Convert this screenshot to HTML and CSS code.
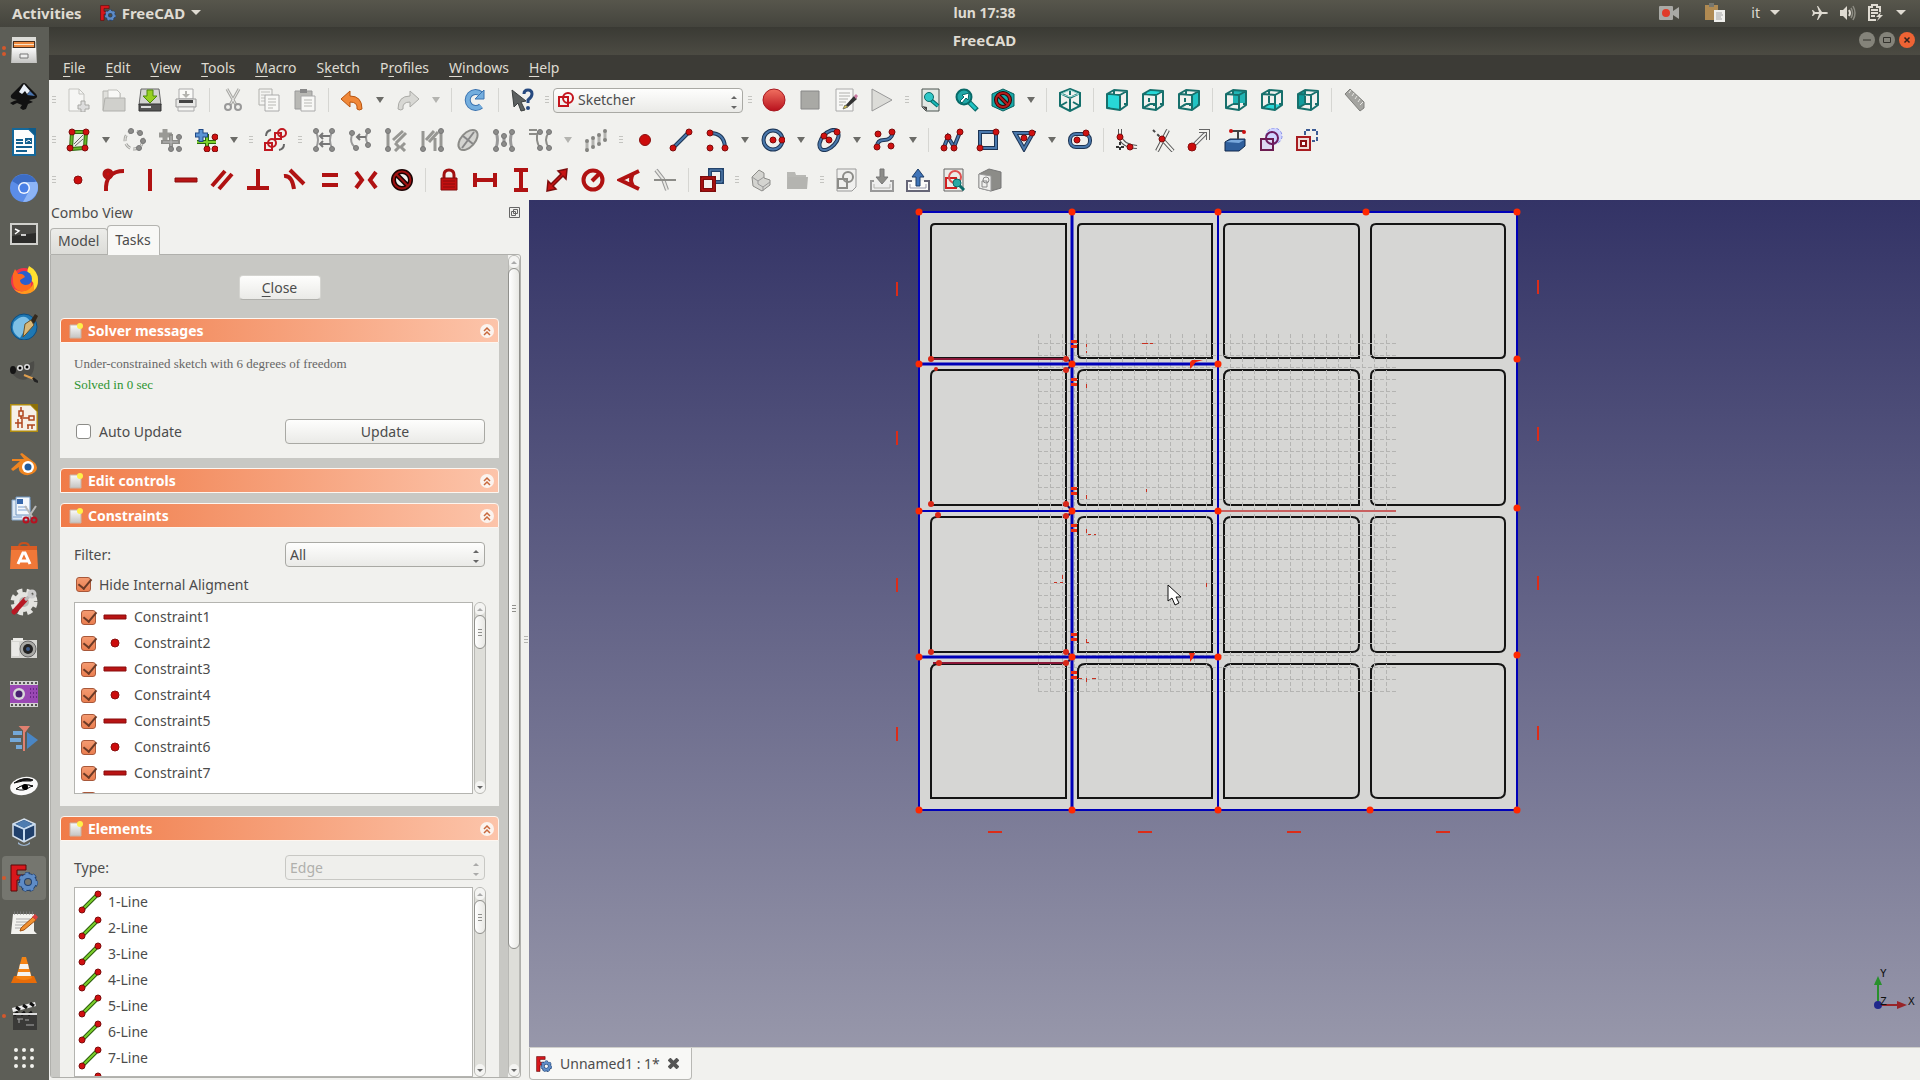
FILE: index.html
```html
<!DOCTYPE html>
<html lang="en">
<head>
    <meta charset="UTF-8">
    <meta name="viewport" content="width=device-width, initial-scale=1.0">
    <title>FreeCAD</title>
    <link rel="stylesheet" href="styles.css">
</head>
<body>

<!-- shared shapes -->
<svg class="defs" aria-hidden="true">
    <defs>
        <linearGradient id="steel" x1="0" y1="0" x2="0" y2="1"><stop offset="0" stop-color="#fafafa"/><stop offset="1" stop-color="#c4c4c2"/></linearGradient>
        <linearGradient id="ball" x1="0" y1="0" x2="0" y2="1"><stop offset="0" stop-color="#f07060"/><stop offset="1" stop-color="#b8101c"/></linearGradient>
        <circle id="n" r="3" fill="#d01010" stroke="#7d0c0c"/>
        <circle id="g" r="2.5" fill="#8c8c8a" stroke="#777"/>
        <symbol id="freecad" viewBox="0 0 28 28">
            <path d="M1 1h15v5H7v5h7v5H7v11H1z" fill="#d8171c" stroke="#5a0808"/>
            <circle cx="18" cy="18" r="6" fill="none" stroke="#1f3f6e" stroke-width="6"/>
            <circle cx="18" cy="18" r="8" fill="none" stroke="#1f3f6e" stroke-width="4" stroke-dasharray="4 3"/>
            <circle cx="18" cy="18" r="6" fill="none" stroke="#5f8cc6" stroke-width="4"/>
            <circle cx="18" cy="18" r="8" fill="none" stroke="#5f8cc6" stroke-width="3" stroke-dasharray="3 4"/>
        </symbol>
        <symbol id="page" viewBox="0 0 14 16">
            <path d="M1 2h11v13H1z" fill="url(#steel)" stroke="#c9b5a8"/>
            <circle cx="11" cy="3" r="3" fill="#fff04a"/>
        </symbol>
        <symbol id="fold" viewBox="0 0 14 14">
            <circle cx="7" cy="7" r="7" fill="#fbf3ee"/>
            <path d="M4 7l3-3 3 3M4 11l3-3 3 3" fill="none" stroke="#c8683c" stroke-width="1.5"/>
        </symbol>
        <symbol id="edge" viewBox="0 0 24 24">
            <path d="M5 19L19 5" stroke="#2d5c0c" stroke-width="4"/><path d="M5 19L19 5" stroke="#7cd02c" stroke-width="2"/>
            <use href="#n" x="4" y="20"/><use href="#n" x="20" y="4"/>
        </symbol>
        <symbol id="hbar" viewBox="0 0 24 24"><path d="M1 10h22v4H1z" fill="#b81414" stroke="#8a0c0c"/></symbol>
        <symbol id="dot" viewBox="0 0 24 24"><circle cx="12" cy="12" r="4" fill="#cc0c0c" stroke="#8a1010"/></symbol>
        <g id="cube" fill="none" stroke="#17706c" stroke-width="2" stroke-linejoin="round">
            <path d="M2 6l13 1v15L2 20zM2 6l7-4 13 1-7 4M22 3v14l-7 5M9 2v4M9 16l-7 4M9 16h6M19 16h3"/>
        </g>
    </defs>
</svg>

<header class="topbar">
    <button class="top-item">Activities</button>
    <button class="top-item app-menu"><svg width="16" height="16"><use href="#freecad"/></svg>FreeCAD<i class="caret"></i></button>
    <span class="clock">lun 17:38</span>
    <div class="tray">
        <svg width="20" height="16" viewBox="0 0 20 16"><path d="M1 1h12q1 0 1 1v4l6-4v12l-6-4v4q0 1-1 1H1q-1 0-1-1V2q0-1 1-1z" fill="#a9a9a5"/><circle cx="7" cy="8" r="4" fill="#e03a28"/></svg>
        <svg class="clip" width="20" height="20" viewBox="0 0 20 20"><path d="M0 2h13v15H0z" fill="#b08a52"/><path d="M4 0h5v4H4z" fill="#77776f"/><path d="M9 7h11v12H9z" fill="#efefec"/><path d="M11 10h6M11 12h7M11 14h5M11 16h6" stroke="#a5a5a5"/></svg>
        <span class="lang">it<i class="caret"></i></span>
        <svg class="plane" width="16" height="16" viewBox="0 0 16 16"><path d="M16 8q0-1-2-1h-4L6 1H5l2 6H3L1 5H0l1 3-1 3h1l2-2h4l-2 6h1l4-6h4q2 0 2-1z" fill="#dfdbd2"/></svg>
        <svg width="16" height="16" viewBox="0 0 16 16"><path d="M0 5h3l4-4v14l-4-4H0z" fill="#dfdbd2"/><path d="M9 5q2 3 0 6" stroke="#dfdbd2" stroke-width="2" fill="none"/><path d="M11 3q3 5 0 10M13 1q4 7 0 14" stroke="#8d8c83" fill="none" stroke-width="1.5"/></svg>
        <svg width="16" height="18" viewBox="0 0 16 18"><path d="M12 8V3H9V1H4v2H1v13h7" fill="none" stroke="#dfdbd2" stroke-width="2"/><path d="M3 6h7M3 9h7M3 12h4" stroke="#dfdbd2" stroke-width="2"/><path d="M13 8l-5 5h3l-2 4 6-6h-3z" fill="#dfdbd2"/></svg>
        <i class="caret"></i>
    </div>
</header>

<div class="desktop">
    <nav class="launcher">
        <button class="launch open two" aria-label="Files"><svg viewBox="0 0 28 28"><path d="M2 2h24l1 25H1z" fill="#bfbfbb"/><path d="M2 1h24v5H2z" fill="#dcdcd8"/><path d="M3 5h22v7H3z" fill="#4a3020"/><path d="M4 6h20v5H4z" fill="#ee8a40"/><path d="M4 8h20v1H4z" fill="#f9e3c8"/><path d="M2 12h24v15H2z" fill="url(#steel)"/><path d="M10 18h8v4h-8z" fill="#eee" stroke="#777"/></svg></button>
        <button class="launch" aria-label="Inkscape"><svg viewBox="0 0 28 28"><path d="M14 1q2 0 4 3l8 8q3 4-2 5l-5 1 4 2-5 2-2 5-3 1-3-2 2-3-5-2-4 2-3-2 4-2 3-1-4-1q-4-2-1-5l9-9q1-2 3-2z" fill="#111"/><path d="M14 2l6 7-3 3-2-3-3 3-3-2z" fill="#e8eef6"/><path d="M20 9l5 5-8-1z" fill="#4a74ad"/></svg></button>
        <button class="launch" aria-label="Writer"><svg viewBox="0 0 28 28"><path d="M3 1h16l6 6v20H3z" fill="#fdfdfd" stroke="#14689b" stroke-width="2"/><path d="M18 0h8v8z" fill="#0e5c8c"/><path d="M6 12h7M6 15h7M6 19h16M6 23h11" stroke="#15608f" stroke-width="2"/><path d="M15 10h7v6h-7z" fill="#15608f"/><path d="M16 14l3-2 2 2" stroke="#fff" fill="none"/></svg></button>
        <button class="launch" aria-label="Chromium"><svg viewBox="0 0 28 28"><circle cx="14" cy="14" r="14" fill="#5b8de8"/><path d="M14 14L2 7A14 14 0 0 1 26 7z" fill="#3c6cc4"/><path d="M14 8h13q3 8-3 15-4 5-11 5l6-11z" fill="#8cb4f6"/><circle cx="14" cy="14" r="6" fill="#f4f8ff"/><circle cx="14" cy="14" r="4.5" fill="#4a80e6"/></svg></button>
        <button class="launch" aria-label="Terminal"><svg viewBox="0 0 28 28"><path d="M0 3h28v22H0z" fill="#d0d0cc"/><path d="M2 5h24v18H2z" fill="#2c2c2a"/><path d="M2 5h24v8L2 16z" fill="#4a4a46"/><path d="M5 9l4 2-4 3M11 15h5" stroke="#fff" stroke-width="1.5" fill="none"/></svg></button>
        <button class="launch" aria-label="Firefox"><svg viewBox="0 0 28 28"><circle cx="14" cy="15" r="13" fill="#f2344a"/><path d="M4 23q10 6 18-3 5-8-2-18 9 6 8 14-1 11-13 12-7 0-11-5z" fill="#ff9a1c"/><path d="M19 0q9 5 9 14 0 6-4 10 1-9-6-12-2-6 1-12z" fill="#ffe030"/><circle cx="14" cy="13" r="8" fill="#2a5fd0"/><path d="M3 8l2-5 3 5q5-1 7 3l-5 3q0 4 5 5 5 0 6-3 1 8-6 9Q3 26 3 14z" fill="#ff6a20"/></svg></button>
        <button class="launch" aria-label="Scribus"><svg viewBox="0 0 28 28"><circle cx="14" cy="15" r="13" fill="#1e78b4" stroke="#0d4d80"/><path d="M4 10q10-10 16-1L10 26Q0 20 4 10z" fill="#7ec0e6"/><path d="M15 12l6-4 3 5-8 9-3 3z" fill="#d8b878" stroke="#6b5228"/><path d="M21 8l4-6 3 2-4 8z" fill="#33281c"/></svg></button>
        <button class="launch" aria-label="GIMP"><svg viewBox="0 0 28 28"><path d="M3 10q4 2 8-1l13-6q1 8-2 13-6 9-15 4l-6-5z" fill="#4c4c48"/><circle cx="10" cy="10" r="3" fill="#ddd"/><circle cx="17" cy="9" r="3" fill="#ddd"/><circle cx="10" cy="10" r="1.5"/><circle cx="17" cy="9" r="1.5"/><ellipse cx="3" cy="12" rx="3" ry="4" fill="#151515"/><path d="M14 17l10 4" stroke="#e0a050" stroke-width="2"/><path d="M23 20l5 4-3-1z" stroke="#222" stroke-width="2"/></svg></button>
        <button class="launch" aria-label="QElectroTech"><svg viewBox="0 0 28 28"><path d="M0 0h21l7 7v21H0z" fill="#f6f0e8" stroke="#b08c10" stroke-width="3"/><path d="M20 0h8v8z" fill="#8c7008"/><path d="M11 3v4M9 7h4v5H9zM11 12v3M11 14h8M19 12h5v4h-5zM5 19h7M8 15v9M12 15v9M17 21h8M18 21v4M22 21v4" fill="none" stroke="#b0441c" stroke-width="1.5"/></svg></button>
        <button class="launch" aria-label="Blender"><svg viewBox="0 0 28 28"><path d="M10 4l2-1 13 10q4 5 0 9-7 6-14 1-3-3-2-6l-6 4-2-2 9-8H2V9h12z" fill="#ee8420"/><circle cx="18" cy="17" r="6" fill="#fff"/><circle cx="18" cy="17" r="3.5" fill="#1f5a9c"/></svg></button>
        <button class="launch" aria-label="Document scissors"><svg viewBox="0 0 28 28"><path d="M2 4h18v20H2z" fill="#dce8f4" stroke="#88a8cc"/><path d="M6 1h14v18H6z" fill="#f4f8fc" stroke="#6f94c0"/><path d="M7 3h6v5H7z" fill="#3768ac"/><path d="M8 11h9M8 14h9M3 21h9" stroke="#7aa0d0"/><path d="M15 10l8 12M26 10l-8 12" stroke="#b8b8b8" stroke-width="2"/><circle cx="16" cy="24" r="2.5" fill="none" stroke="#b81020" stroke-width="2"/><circle cx="24" cy="24" r="2.5" fill="none" stroke="#b81020" stroke-width="2"/></svg></button>
        <button class="launch" aria-label="Software"><svg viewBox="0 0 28 28"><path d="M9 5q0-4 5-4t5 4" fill="none" stroke="#c8501c" stroke-width="2"/><path d="M1 4h26v8H1z" fill="#d85c24"/><path d="M1 8h26l1 19H0z" fill="#f07838"/><path d="M8 22l5-11h2l5 11M9 19h10" fill="none" stroke="#fff" stroke-width="3"/></svg></button>
        <button class="launch" aria-label="Tweaks"><svg viewBox="0 0 28 28"><circle cx="14" cy="14" r="10" fill="#e4e4e0"/><circle cx="14" cy="14" r="11" fill="none" stroke="#e4e4e0" stroke-width="5" stroke-dasharray="5 4"/><circle cx="14" cy="14" r="5" fill="#b8b8b4"/><path d="M4 24L15 12" stroke="#b81824" stroke-width="5" stroke-linecap="round"/><path d="M15 12l7-6" stroke="#bbb" stroke-width="3"/><circle cx="22" cy="6" r="3" fill="none" stroke="#ccc" stroke-width="3"/></svg></button>
        <button class="launch" aria-label="Camera"><svg viewBox="0 0 28 28"><path d="M1 6h26v18H1z" fill="#d6d6d2"/><path d="M3 4h10v3H3z" fill="#ecece8"/><path d="M2 8h7v14H2z" fill="#e9e9e6"/><circle cx="18" cy="15" r="8" fill="#a9a9a5" stroke="#666"/><circle cx="18" cy="15" r="5" fill="#222"/><circle cx="18" cy="15" r="2" fill="#3c5a88"/></svg></button>
        <button class="launch" aria-label="Movie"><svg viewBox="0 0 28 28"><path d="M0 1h28v26H0z" fill="#d2d2d0"/><path d="M0 5h28v18H0z" fill="#9a48b4"/><path d="M1 3h27M1 25h27" stroke="#555" stroke-width="2" stroke-dasharray="2 2"/><circle cx="9" cy="14" r="6" fill="#d8d8d8"/><circle cx="9" cy="14" r="3.5" fill="#4a2070"/><path d="M20 9h7M20 13h7M20 17h7" stroke="#6c2888" stroke-width="2" stroke-dasharray="1 2"/></svg></button>
        <button class="launch" aria-label="Kdenlive"><svg viewBox="0 0 28 28"><path d="M3 5h9v4H3zM0 12h11v4H0zM6 19h6v4H6z" fill="#74a8d8"/><path d="M17 6l11 8-11 9z" fill="#4a86c4"/><path d="M14 1v24M11 1h7l-3 4z" stroke="#e08070" stroke-width="2" fill="#e08070"/></svg></button>
        <button class="launch" aria-label="Viewer"><svg viewBox="0 0 28 28"><ellipse cx="14" cy="14" rx="14" ry="9" transform="rotate(-12 14 14)" fill="#fafafa"/><path d="M4 11q10-7 19-3l-2 1q-8-1-17 2zM6 17q8-6 17-3" fill="#111" stroke="#111"/><path d="M6 17q8 3 14-2l3-1q-9-3-17 3z" fill="#fff" stroke="#111"/><circle cx="15" cy="15" r="3"/></svg></button>
        <button class="launch" aria-label="VirtualBox"><svg viewBox="0 0 28 28"><path d="M14 1l11 5v12l-11 6-11-6V6z" fill="#20406c" stroke="#d4e0ee" stroke-width="1.5"/><path d="M3 6l11 5 11-5M14 11v13" stroke="#c8dcf0" stroke-width="2" fill="none"/><path d="M14 2l8 4-8 4-8-4z" fill="#4e7cb0"/><path d="M8 24q6 6 12 0v2q-6 4-12 0z" fill="#9cb4d0"/></svg></button>
        <button class="launch open active" aria-label="FreeCAD"><svg><use href="#freecad"/></svg></button>
        <button class="launch" aria-label="Notes"><svg viewBox="0 0 28 28"><path d="M3 4h21v17l3 3H1z" fill="#f2f2ee"/><path d="M4 3h20" stroke="#777" stroke-width="3" stroke-dasharray="1 2"/><path d="M6 9h14M6 12h13M5 15h10M5 18h8" stroke="#aaa"/><path d="M11 18L23 7l3 3-12 10-4 1z" fill="#f09030" stroke="#a05010"/><path d="M22 7l3-3 3 3-2 3z" fill="#d84040"/></svg></button>
        <button class="launch" aria-label="VLC"><svg viewBox="0 0 28 28"><path d="M4 20h20l3 7H1z" fill="#e86c08"/><path d="M12 1h4l6 21q-8 4-16 0z" fill="#f58414"/><path d="M10 8h8l1 5H9zM8 16h12l1 4H7z" fill="#f4f4f0"/></svg></button>
        <button class="launch open" aria-label="OpenShot"><svg viewBox="0 0 28 28"><path d="M3 12h24v16H3z" fill="#3a3a38"/><path d="M2 6L25 0l1 4L3 10z" fill="#eee"/><path d="M6 5l4 3M13 3l4 3M20 1l4 3M4 13l4-3M11 13l4-3M18 13l4-3" stroke="#111" stroke-width="3"/><path d="M3 11h24v2H3z" fill="#ddd"/><path d="M7 17h6M9 17v4M15 18h4M16 23h8" stroke="#aaa"/></svg></button>
        <button class="launch apps" aria-label="Show applications"><svg viewBox="0 0 28 28"><path d="M6 6h18M6 14h18M6 22h18" stroke="#f2f2ee" stroke-width="4" stroke-linecap="round" stroke-dasharray="0 8"/></svg></button>
    </nav>

    <div class="window">
        <div class="titlebar">
            <h1>FreeCAD</h1>
            <div class="window-buttons">
                <button aria-label="Minimize"><svg width="8" height="8"><path d="M0 4h8" stroke="#33322d"/></svg></button>
                <button aria-label="Maximize"><svg width="8" height="8"><path d="M.5 1.5h7v5h-7z" fill="none" stroke="#33322d"/></svg></button>
                <button class="close" aria-label="Close window"><svg width="8" height="8"><path d="M1.5 1.5l5 5M6.5 1.5l-5 5" stroke="#33221d" stroke-width="1.5"/></svg></button>
            </div>
        </div>

        <nav class="menubar">
            <button><u>F</u>ile</button>
            <button><u>E</u>dit</button>
            <button><u>V</u>iew</button>
            <button><u>T</u>ools</button>
            <button><u>M</u>acro</button>
            <button>S<u>k</u>etch</button>
            <button>P<u>r</u>ofiles</button>
            <button><u>W</u>indows</button>
            <button><u>H</u>elp</button>
        </nav>

        <div class="toolbars">
            <div class="toolbar">
                <i class="grip"></i>
                <button class="tool" aria-label="New"><svg viewBox="0 0 24 24"><path d="M3 1h10l5 5v17H3z" fill="#f6f6f4" stroke="#c4c4c0"/><path d="M13 1v5h5" fill="none" stroke="#c4c4c0"/><path d="M15 13h4v4h4v4h-4v3h-4v-3h-3v-4h3z" fill="#ddd" stroke="#a8a8a4"/></svg></button>
                <button class="tool" aria-label="Open"><svg viewBox="0 0 24 24"><path d="M1 22V3h7l1 2h9v4" fill="#e0e0dc" stroke="#b4b4b0"/><path d="M6 2h9l3 3v8H6z" fill="#f8f8f6" stroke="#c0c0bc"/><path d="M3 10h20v13H1z" fill="#d0d0cc" stroke="#b0b0ac"/></svg></button>
                <button class="tool" aria-label="Save"><svg viewBox="0 0 24 24"><path d="M3 1h18l2 16H1z" fill="#d4d4d2" stroke="#666"/><path d="M1 16h22v7H1z" fill="#555" stroke="#333"/><path d="M3 19h10" stroke="#ddd" stroke-width="2"/><path d="M9 2h6v6h4l-7 7-7-7h4z" fill="#96d020" stroke="#4e8a0a"/></svg></button>
                <button class="tool" aria-label="Print"><svg viewBox="0 0 24 24"><path d="M5 1h14v10H5z" fill="#fafaf8" stroke="#aaa"/><path d="M11 3h2v3h3l-4 4-4-4h3z" fill="#b4b4b0"/><path d="M2 11h20v8H2z" fill="#e8e8e6" stroke="#999"/><path d="M5 12h14v3H5z" fill="#444"/><path d="M4 19h16v4H4z" fill="#f4f4f2" stroke="#aaa"/></svg></button>
                <i class="sep"></i>
                <button class="tool" aria-label="Cut"><svg viewBox="0 0 24 24"><path d="M6 1l9 16M18 1L9 17" stroke="#aaaaa6" stroke-width="3"/><path d="M6 1l9 16M18 1L9 17" stroke="#e8e8e6"/><circle cx="7" cy="19" r="3" fill="none" stroke="#999" stroke-width="2"/><circle cx="17" cy="19" r="3" fill="none" stroke="#999" stroke-width="2"/></svg></button>
                <button class="tool" aria-label="Copy"><svg viewBox="0 0 24 24"><path d="M2 1h13v16H2z" fill="#f4f4f2" stroke="#b0b0ac"/><path d="M4 4h9M4 7h4M4 10h4M4 13h4" stroke="#c0c0bc"/><path d="M8 7h14v16H8z" fill="#f8f8f6" stroke="#aaa"/><path d="M11 11h8M11 14h8M11 17h8M11 20h5" stroke="#b8b8b4"/></svg></button>
                <button class="tool" aria-label="Paste"><svg viewBox="0 0 24 24"><path d="M2 3h17v18H2z" fill="#b8b8b4" stroke="#999"/><path d="M7 1h7v4H7z" fill="#888"/><path d="M8 8h14v15H8z" fill="#f8f8f6" stroke="#aaa"/><path d="M11 12h8M11 15h8M11 18h8" stroke="#b8b8b4"/></svg></button>
                <i class="sep"></i>
                <button class="tool" aria-label="Undo"><svg viewBox="0 0 24 24"><path d="M1 11l9-8v5q12 0 12 13-3 2-5 0 1-7-7-7v5z" fill="#f08838" stroke="#b85410"/></svg></button>
                <button class="drop" aria-label="Undo list"><i></i></button>
                <button class="tool" aria-label="Redo"><svg viewBox="0 0 24 24"><path d="M23 11l-9-8v5Q2 8 2 21q3 2 5 0-1-7 7-7v5z" fill="#d8d8d4" stroke="#aaaaa6"/></svg></button>
                <button class="drop off" aria-label="Redo list"><i></i></button>
                <i class="sep"></i>
                <button class="tool" aria-label="Refresh"><svg viewBox="0 0 24 24"><path d="M18 18a8 8 0 1 1 0-12" fill="none" stroke="#3c74b0" stroke-width="6"/><path d="M18 18a8 8 0 1 1 0-12" fill="none" stroke="#74aede" stroke-width="4"/><path d="M21 2v9h-9z" fill="#74aede" stroke="#3c74b0"/></svg></button>
                <i class="sep"></i>
                <button class="tool" aria-label="What's this?"><svg viewBox="0 0 24 24"><path d="M2 2l14 11-5 1 4 8-4 1-3-8-4 4z" fill="#5c6060" stroke="#3c4040"/><path d="M14 6q0-4 4-4t4 4q0 3-4 6v3" fill="none" stroke="#274a80" stroke-width="3"/><circle cx="18" cy="20" r="2" fill="#274a80"/></svg></button>
                <i class="grip"></i>
                <div class="combo workbench">
                    <svg width="18" height="18" viewBox="0 0 18 18"><path d="M2 6h9v9H2z" fill="none" stroke="#c4141c" stroke-width="2"/><circle cx="11" cy="7" r="5" fill="none" stroke="#c4141c" stroke-width="2"/></svg>
                    <select aria-label="Workbench"><option>Sketcher</option></select>
                </div>
                <i class="grip"></i>
                <button class="tool" aria-label="Record macro"><svg viewBox="0 0 24 24"><circle cx="12" cy="12" r="11" fill="url(#ball)" stroke="#a81820"/></svg></button>
                <button class="tool" aria-label="Stop macro"><svg viewBox="0 0 24 24"><path d="M3 3h18v18H3z" fill="#a9a9a5" stroke="#888"/></svg></button>
                <button class="tool" aria-label="Edit macro"><svg viewBox="0 0 24 24"><path d="M2 1h17v22H2z" fill="#f8f8f6" stroke="#aaa"/><path d="M5 5h11M5 8h11M5 11h9M5 14h7M5 17h4" stroke="#b0b0ac"/><path d="M11 18l9-10 3 3-9 8z" fill="#333"/><path d="M20 8l2-2 2 2-2 3z" fill="#c878a0"/><path d="M11 17l-2 4 5-2z" fill="#e8d040" stroke="#776"/></svg></button>
                <button class="tool" aria-label="Run macro"><svg viewBox="0 0 24 24"><path d="M2 1l20 11L2 23z" fill="#dcdcd8" stroke="#999"/></svg></button>
                <i class="grip"></i>
                <button class="tool" aria-label="Fit all"><svg viewBox="0 0 24 24"><path d="M3 1h17v22H7l-4-4z" fill="#e2e8e4" stroke="#4c5450"/><path d="M3 18l5 1v4z" fill="#444"/><path d="M12 12l7 6" stroke="#086a68" stroke-width="4"/><path d="M13 13l6 5" stroke="#18b8b8" stroke-width="2"/><circle cx="10" cy="9" r="4.5" fill="#30c8c8" stroke="#086a68"/></svg></button>
                <button class="tool" aria-label="Fit selection"><svg viewBox="0 0 24 24"><path d="M13 13l9 9" stroke="#086a68" stroke-width="5"/><path d="M13 13l8 8" stroke="#20c4c4" stroke-width="3"/><circle cx="9" cy="9" r="7.5" fill="#20a8a8" stroke="#086a68" stroke-width="2"/><path d="M5 13l4-4-2-2 7-2-1 7-2-2-4 5z" fill="#fff" stroke="#066"/></svg></button>
                <button class="tool" aria-label="Draw style"><svg viewBox="0 0 24 24"><path d="M12 1l11 5v12l-11 5-11-5V6z" fill="#18a8a8" stroke="#08605e"/><g fill="none" stroke="#2a0808" stroke-width="4"><circle cx="12" cy="12" r="7"/><path d="M7 7l10 10"/></g><g fill="none" stroke="#b81c1c" stroke-width="2"><circle cx="12" cy="12" r="7"/><path d="M7 7l10 10"/></g></svg></button>
                <button class="drop" aria-label="Draw styles"><i></i></button>
                <i class="sep"></i>
                <button class="tool" aria-label="Axonometric"><svg viewBox="0 0 24 24"><path d="M12 1l10 4v13l-10 5-10-5V5zM2 5l10 5 10-5M12 10v13M12 1v6M2 18l7-4M22 18l-7-4" fill="none" stroke="#14706c" stroke-width="2"/><path d="M12 2l9 4-9 3-9-3z" fill="none" stroke="#9cd8d4"/></svg></button>
                <i class="sep"></i>
                <button class="tool" aria-label="Front"><svg viewBox="0 0 24 24"><path d="M2 6l13 1v15L2 20z" fill="#28d8d8"/><use href="#cube"/><path d="M3 7l11 1v12L3 19z" fill="#28d8d8"/></svg></button>
                <button class="tool" aria-label="Top"><svg viewBox="0 0 24 24"><path d="M2 6l7-4 13 1-7 4z" fill="#28d8d8"/><use href="#cube"/><path d="M5 6l4-3 10 1-4 2z" fill="#28d8d8"/><path d="M8 10v4M6 18l3-2M12 17h2" stroke="#17706c" stroke-width="2"/></svg></button>
                <button class="tool" aria-label="Right"><svg viewBox="0 0 24 24"><path d="M15 7l7-4v14l-7 5z" fill="#20c4c4"/><use href="#cube"/><path d="M16 8l5-3v11l-5 4z" fill="#20c4c4"/><path d="M8 10v4M6 18l3-2M12 17h2" stroke="#17706c" stroke-width="2"/></svg></button>
                <i class="sep"></i>
                <button class="tool" aria-label="Rear"><svg viewBox="0 0 24 24"><path d="M9 3h12v12H9z" fill="#20b4b4"/><use href="#cube"/></svg></button>
                <button class="tool" aria-label="Bottom"><svg viewBox="0 0 24 24"><path d="M2 20l7-5 13 2-7 5z" fill="#28d8d8"/><use href="#cube"/><path d="M9 8v7" stroke="#17706c" stroke-width="2"/></svg></button>
                <button class="tool" aria-label="Left"><svg viewBox="0 0 24 24"><path d="M2 6l7-4v14l-7 4z" fill="#109c9c"/><use href="#cube"/><path d="M9 8v7" stroke="#17706c" stroke-width="2"/></svg></button>
                <i class="sep"></i>
                <button class="tool" aria-label="Measure"><svg viewBox="0 0 24 24"><path d="M2 6l5-5 14 13v6l-4 3z" fill="#a4a4a0" stroke="#80807c"/><path d="M8 2l-2 3M11 5L9 8M14 8l-2 3M17 11l-2 3M20 14l-3 3" stroke="#e8e8e4"/></svg></button>
            </div>

            <div class="toolbar">
                <i class="grip"></i>
                <button class="tool" aria-label="View sketch"><svg viewBox="0 0 24 24"><path d="M6 4h14l-1 16-14 1z" fill="#eceee8" stroke="#2c6a0c" stroke-width="4"/><path d="M6 4h14l-1 16-14 1z" fill="none" stroke="#66b828" stroke-width="2"/><path d="M8 16l9-9M9 18l8-7" stroke="#666"/><use href="#n" x="6" y="4"/><use href="#n" x="20" y="4"/><use href="#n" x="4" y="20"/><use href="#n" x="19" y="20"/></svg></button>
                <button class="drop" aria-label="View options"><i></i></button>
                <button class="tool" aria-label="Close shape"><svg viewBox="0 0 24 24"><circle cx="12" cy="12" r="9" fill="none" stroke="#a4a4a0" stroke-width="3" stroke-dasharray="6 3"/><circle cx="12" cy="12" r="9" fill="none" stroke="#f1f1ee" stroke-dasharray="6 3"/><use href="#g" x="9" y="3"/><use href="#g" x="18" y="5"/><use href="#g" x="21" y="13"/><use href="#g" x="17" y="20"/></svg></button>
                <button class="tool" aria-label="Connect edges"><svg viewBox="0 0 24 24"><path d="M7 1v13M1 7h13" stroke="#999995" stroke-width="5"/><path d="M13 6v16M3 14h19" stroke="#8c8c88" stroke-width="4"/><path d="M13 8v12M5 14h15" stroke="#bbb"/><use href="#g" x="21" y="9"/><use href="#g" x="13" y="21"/><use href="#g" x="21" y="21"/></svg></button>
                <button class="tool" aria-label="Select constraints"><svg viewBox="0 0 24 24"><path d="M13 6v16M3 14h19" stroke="#2c6a0c" stroke-width="4"/><path d="M13 6v16M3 14h19" stroke="#7cd02c" stroke-width="2"/><path d="M7 1v13M1 7h13" stroke="#204a87" stroke-width="5"/><path d="M7 2v11M2 7h11" stroke="#5c94d4" stroke-width="3"/><use href="#n" x="21" y="9"/><use href="#n" x="13" y="21"/><use href="#n" x="21" y="21"/></svg></button>
                <button class="drop" aria-label="Select options"><i></i></button>
                <i class="grip"></i>
                <button class="tool" aria-label="Swap"><svg viewBox="0 0 24 24"><g fill="none" stroke="#c01820" stroke-width="2"><path d="M12 5h6v6h-6zM2 15h7v7H2z"/><circle cx="19" cy="5" r="4"/><circle cx="9" cy="15" r="4"/></g><path d="M3 8q0-5 5-6M21 16q0 5-5 6" fill="none" stroke="#666" stroke-width="2"/></svg></button>
                <i class="grip"></i>
                <button class="tool" aria-label="Select coincident"><svg viewBox="0 0 24 24"><path d="M4 4q4 8 0 16M20 4q-4 8 0 16" fill="none" stroke="#999" stroke-width="2"/><path d="M8 8h10M8 16h10M11 5L8 8l3 3M11 13l-3 3 3 3" fill="none" stroke="#777" stroke-width="2"/><use href="#g" x="4" y="3"/><use href="#g" x="20" y="3"/><use href="#g" x="4" y="21"/><use href="#g" x="20" y="21"/></svg></button>
                <button class="tool" aria-label="Select redundant"><svg viewBox="0 0 24 24"><path d="M4 7q-3 8 4 13M20 4q-4 6 0 12" fill="none" stroke="#999" stroke-width="2"/><path d="M9 9h9M12 6L9 9l3 3" fill="none" stroke="#777" stroke-width="2"/><use href="#g" x="4" y="5"/><use href="#g" x="20" y="3"/><use href="#g" x="8" y="20"/><use href="#g" x="20" y="17"/></svg></button>
                <button class="tool" aria-label="Select conflicting"><svg viewBox="0 0 24 24"><path d="M4 3v18M9 12l10-9M12 15L22 5M11 15l4 4-4 4M21 15l-4 4 4 4" fill="none" stroke="#979793" stroke-width="3"/><use href="#g" x="4" y="3"/><use href="#g" x="4" y="21"/></svg></button>
                <button class="tool" aria-label="Select elements"><svg viewBox="0 0 24 24"><path d="M3 3v18M21 3v18M15 10v13M6 12l8-9M9 14l9-10" stroke="#979793" stroke-width="3"/><use href="#g" x="3" y="21"/><use href="#g" x="21" y="3"/><use href="#g" x="21" y="21"/></svg></button>
                <button class="tool" aria-label="Internal geometry"><svg viewBox="0 0 24 24"><ellipse cx="12" cy="12" rx="12" ry="7" transform="rotate(-48 12 12)" fill="#d4d4d0" stroke="#8c8c88" stroke-width="2"/><path d="M6 20L18 4M7 8l10 8" stroke="#888" stroke-width="2"/></svg></button>
                <button class="tool" aria-label="Symmetry"><svg viewBox="0 0 24 24"><path d="M4 4q3 8 0 16M20 4q-3 8 0 16M12 6v12" fill="none" stroke="#999" stroke-width="3"/><use href="#g" x="4" y="4"/><use href="#g" x="20" y="4"/><use href="#g" x="4" y="21"/><use href="#g" x="20" y="21"/><use href="#g" x="12" y="8"/><use href="#g" x="12" y="16"/></svg></button>
                <button class="tool" aria-label="Clone"><svg viewBox="0 0 24 24"><path d="M1 2h8M1 6h8M10 4q-3 8 2 16M21 4q-6 8 0 16" fill="none" stroke="#8c8c88" stroke-width="2"/><use href="#g" x="12" y="4"/><use href="#g" x="21" y="4"/><use href="#g" x="12" y="20"/><use href="#g" x="21" y="20"/></svg></button>
                <button class="drop off" aria-label="Clone options"><i></i></button>
                <button class="tool" aria-label="Rectangular array"><svg viewBox="0 0 24 24"><path d="M3 13v9M9 10v9M15 7v9M21 3v9" stroke="#b4b4b0" stroke-width="3"/><path d="M3 13v.1M3 22v.1M9 10v.1M9 19v.1M15 7v.1M15 16v.1M21 3v.1M21 12v.1" stroke="#848480" stroke-width="4" stroke-linecap="round"/></svg></button>
                <i class="grip"></i>
                <button class="tool" aria-label="Point"><svg viewBox="0 0 24 24"><circle cx="12" cy="12" r="5.5" fill="#cc0c0c" stroke="#8a1010"/></svg></button>
                <button class="tool geo" aria-label="Line"><svg viewBox="0 0 24 24"><path class="b" d="M5 19L19 5"/><path class="f" d="M5 19L19 5"/><use href="#n" x="4" y="20"/><use href="#n" x="20" y="4"/></svg></button>
                <button class="tool geo" aria-label="Arc"><svg viewBox="0 0 24 24"><path class="b" d="M5 5q14 0 15 14"/><path class="f" d="M5 5q14 0 15 14"/><use href="#n" x="5" y="5"/><use href="#n" x="20" y="20"/><use href="#n" x="5" y="20"/></svg></button>
                <button class="drop" aria-label="Arcs"><i></i></button>
                <button class="tool geo" aria-label="Circle"><svg viewBox="0 0 24 24"><circle class="b" cx="12" cy="12" r="9.5"/><circle class="f" cx="12" cy="12" r="9.5"/><use href="#n" x="12" y="12"/><use href="#n" x="21" y="12"/></svg></button>
                <button class="drop" aria-label="Circles"><i></i></button>
                <button class="tool geo" aria-label="Ellipse"><svg viewBox="0 0 24 24"><ellipse class="b" cx="12" cy="12" rx="12" ry="7" transform="rotate(-48 12 12)"/><ellipse class="f" cx="12" cy="12" rx="12" ry="7" transform="rotate(-48 12 12)"/><use href="#n" x="20" y="4"/><use href="#n" x="7" y="8"/><use href="#n" x="12" y="12"/></svg></button>
                <button class="drop" aria-label="Conics"><i></i></button>
                <button class="tool geo" aria-label="B-spline"><svg viewBox="0 0 24 24"><path class="b" d="M4 19q0-7 7-7t9-7"/><path class="f" d="M4 19q0-7 7-7t9-7"/><use href="#n" x="5" y="6"/><use href="#n" x="19" y="4"/><use href="#n" x="4" y="19"/><use href="#n" x="18" y="18"/></svg></button>
                <button class="drop" aria-label="B-splines"><i></i></button>
                <i class="sep"></i>
                <button class="tool geo" aria-label="Polyline"><svg viewBox="0 0 24 24"><path class="b" d="M4 19L8 9l6 10 6-15"/><path class="f" d="M4 19L8 9l6 10 6-15"/><use href="#n" x="4" y="20"/><use href="#n" x="8" y="9"/><use href="#n" x="14" y="20"/><use href="#n" x="20" y="4"/></svg></button>
                <button class="tool geo" aria-label="Rectangle"><svg viewBox="0 0 24 24"><path class="b" d="M4 4h16v16H4z"/><path class="f" d="M4 4h16v16H4z"/><use href="#n" x="20" y="4"/><use href="#n" x="4" y="20"/></svg></button>
                <button class="tool geo" aria-label="Polygon"><svg viewBox="0 0 24 24"><path class="b" d="M3 5h18l-9 16z"/><path class="f" d="M3 5h18l-9 16z"/><use href="#n" x="20" y="5"/><use href="#n" x="12" y="10"/></svg></button>
                <button class="drop" aria-label="Polygons"><i></i></button>
                <button class="tool geo" aria-label="Slot"><svg viewBox="0 0 24 24"><rect class="b" x="2" y="6" width="20" height="13" rx="6"/><rect class="f" x="2" y="6" width="20" height="13" rx="6"/><use href="#n" x="18" y="5"/><use href="#n" x="9" y="12"/></svg></button>
                <i class="sep"></i>
                <button class="tool" aria-label="Fillet"><svg viewBox="0 0 24 24"><path d="M5 1v7M5 8q2 10 17 11" fill="none" stroke="#555" stroke-width="4"/><path d="M5 1v7M5 8q2 10 17 11" fill="none" stroke="#f4f4f0" stroke-width="2"/><path d="M5 14v9M1 19h9" stroke="#333" stroke-width="2" stroke-dasharray="3 2"/><use href="#n" x="5" y="9"/><use href="#n" x="15" y="19"/></svg></button>
                <button class="tool" aria-label="Trim"><svg viewBox="0 0 24 24"><path d="M17 2L6 23M11 11l11 12" stroke="#555" stroke-width="4"/><path d="M17 2L6 23M11 11l11 12" stroke="#f4f4f0" stroke-width="2"/><path d="M2 2l7 7" stroke="#444" stroke-width="2" stroke-dasharray="3 3"/><use href="#n" x="11" y="11"/></svg></button>
                <button class="tool" aria-label="Extend"><svg viewBox="0 0 24 24"><path d="M6 18L18 6M12 3h9v9" fill="none" stroke="#666" stroke-width="4"/><path d="M6 18L18 6M12 3h9v9" fill="none" stroke="#f4f4f0" stroke-width="2"/><circle cx="5" cy="19" r="4" fill="#cc0c0c" stroke="#8a1010"/></svg></button>
                <button class="tool" aria-label="External geometry"><svg viewBox="0 0 24 24"><path d="M2 14l5-3h15v7l-6 5H2z" fill="#2f5f9c" stroke="#12294a"/><path d="M3 14l5-2h13l-5 3z" fill="#78a8dc"/><path d="M8 3h13M15 3v8" stroke="#444" stroke-width="2"/><circle cx="8" cy="3" r="2" fill="#c11"/><circle cx="21" cy="4" r="2" fill="#c11"/></svg></button>
                <button class="tool" aria-label="Carbon copy"><svg viewBox="0 0 24 24"><circle cx="15" cy="8" r="8" fill="#cfd4ff" stroke="#8890e8" stroke-dasharray="3 2"/><path d="M2 11h12v11H2z" fill="#dcd8f4" stroke="#6c1c50" stroke-width="2"/><circle cx="13" cy="10" r="6" fill="none" stroke="#6c1c60" stroke-width="2"/></svg></button>
                <button class="tool" aria-label="Construction mode"><svg viewBox="0 0 24 24"><path d="M10 7V2h12v11h-5" fill="none" stroke="#3c5c94" stroke-width="2" stroke-dasharray="4 2"/><path d="M2 9h13v13H2z" fill="#f0dcd8" stroke="#a81c20" stroke-width="2"/><path d="M6 13h5v5H6z" fill="#fff" stroke="#8a1014" stroke-width="2"/></svg></button>
            </div>

            <div class="toolbar">
                <i class="grip"></i>
                <button class="tool" aria-label="Coincident"><svg><use href="#dot"/></svg></button>
                <button class="tool con" aria-label="Point on object"><svg viewBox="0 0 24 24"><path d="M4 23Q3 3 22 3"/><circle cx="6" cy="6" r="3.5" fill="#cc0c0c"/></svg></button>
                <button class="tool con" aria-label="Vertical"><svg viewBox="0 0 24 24"><path d="M12 1v22"/></svg></button>
                <button class="tool" aria-label="Horizontal"><svg><use href="#hbar"/></svg></button>
                <button class="tool con" aria-label="Parallel"><svg viewBox="0 0 24 24"><path d="M2 18L15 3M9 21L22 6"/></svg></button>
                <button class="tool con" aria-label="Perpendicular"><svg viewBox="0 0 24 24"><path d="M12 1v19M1 20h22"/></svg></button>
                <button class="tool con" aria-label="Tangent"><svg viewBox="0 0 24 24"><path d="M8 2l14 14M2 8q8-1 10 13"/></svg></button>
                <button class="tool con" aria-label="Equal"><svg viewBox="0 0 24 24"><path d="M4 7h16M4 17h16"/></svg></button>
                <button class="tool con" aria-label="Symmetric"><svg viewBox="0 0 24 24"><path d="M2 4l6 8-6 8M22 4l-6 8 6 8"/></svg></button>
                <button class="tool" aria-label="Block"><svg viewBox="0 0 24 24"><g fill="none" stroke="#1c0404" stroke-width="5"><circle cx="12" cy="12" r="8.5"/><path d="M6 6l12 12"/></g><g fill="none" stroke="#a01010" stroke-width="2"><circle cx="12" cy="12" r="8.5"/><path d="M6 6l12 12"/></g></svg></button>
                <i class="sep"></i>
                <button class="tool" aria-label="Lock"><svg viewBox="0 0 24 24"><path d="M7 11V7q0-5 5-5t5 5v4" fill="none" stroke="#a01010" stroke-width="3"/><path d="M4 10h16v12H4z" fill="#c41010" stroke="#800c0c"/><path d="M6 13h12M6 16h12M6 19h12" stroke="#8a0c0c"/></svg></button>
                <button class="tool con" aria-label="Horizontal distance"><svg viewBox="0 0 24 24"><path d="M2 5v14M22 5v14M2 12h20"/></svg></button>
                <button class="tool con" aria-label="Vertical distance"><svg viewBox="0 0 24 24"><path d="M5 2h14M5 22h14M12 2v20"/></svg></button>
                <button class="tool" aria-label="Distance"><svg viewBox="0 0 24 24"><path d="M22 1l-1 10-3-3L8 18l3 3-9 2 1-10 3 3L16 6l-3-3z" fill="#c81414" stroke="#7d0c0c" stroke-width="1.5"/></svg></button>
                <button class="tool con" aria-label="Radius"><svg viewBox="0 0 24 24"><circle cx="12" cy="12" r="9.5"/><path d="M11 13l8-8"/></svg></button>
                <button class="tool con" aria-label="Angle"><svg viewBox="0 0 24 24"><path d="M22 3L3 12l19 9M16 6q-4 6 0 12"/></svg></button>
                <button class="tool" aria-label="Refraction"><svg viewBox="0 0 24 24"><path d="M3 2l7 9 4 11" fill="none" stroke="#999" stroke-width="4"/><path d="M3 2l7 9 4 11" fill="none" stroke="#e8e8e4" stroke-width="2"/><path d="M1 12h22" stroke="#8c8c88" stroke-width="2"/></svg></button>
                <i class="sep"></i>
                <button class="tool" aria-label="Toggle driving"><svg viewBox="0 0 24 24"><path d="M10 2h12v12H10z" fill="none" stroke="#24446c" stroke-width="4"/><path d="M10 2h12v12H10z" fill="none" stroke="#5c8cc0"/><path d="M2 10h12v12H2z" fill="#f1f1ee" stroke="#7d0c0c" stroke-width="4"/><path d="M2 10h12v12H2z" fill="none" stroke="#c81414"/></svg></button>
                <i class="grip"></i>
                <button class="tool" aria-label="Part"><svg viewBox="0 0 24 24"><path d="M3 9l7-7 5 3v5l6 2v5l-8 6-9-5z" fill="#d4d4d0" stroke="#8c8c88"/><path d="M3 9l6 4v3l5 3v4M9 13l6-4M14 19l7-5" fill="none" stroke="#999"/></svg></button>
                <button class="tool" aria-label="Group"><svg viewBox="0 0 24 24"><path d="M2 21V4h8l1 3h10v3" fill="#b8b8b4"/><path d="M3 9h20l-1 12H2z" fill="#b4b4b0"/></svg></button>
                <i class="grip"></i>
                <button class="tool" aria-label="New sketch"><svg viewBox="0 0 24 24"><path d="M3 1h19v18l-4 4H3z" fill="#f0f0ee" stroke="#999"/><path d="M4 11h9v9H4z" fill="none" stroke="#8c8c88" stroke-width="2"/><circle cx="14" cy="9" r="5" fill="none" stroke="#8c8c88" stroke-width="2"/></svg></button>
                <button class="tool" aria-label="Leave sketch"><svg viewBox="0 0 24 24"><path d="M4 13H1v10h22V13h-3" fill="#eee" stroke="#999" stroke-width="2"/><path d="M4 16v4h16v-4" fill="none" stroke="#b4b4b0"/><path d="M10 1h4v8h4l-6 7-6-7h4z" fill="#8c8c88" stroke="#777"/></svg></button>
                <button class="tool" aria-label="Import"><svg viewBox="0 0 24 24"><path d="M6 13H1v10h22V13h-5" fill="#fcfcfa" stroke="#667" stroke-width="2"/><path d="M4 16v4h16v-4" fill="none" stroke="#99a"/><path d="M10 18V9H6l6-8 6 8h-4v9z" fill="#3f74b8" stroke="#1c3c68"/></svg></button>
                <button class="tool" aria-label="View section"><svg viewBox="0 0 24 24"><path d="M2 1h19v22H2z" fill="#ecece8" stroke="#666"/><path d="M4 10h10v10H4z" fill="none" stroke="#d02020" stroke-width="2"/><circle cx="13" cy="9" r="6" fill="none" stroke="#e05050" stroke-width="2"/><path d="M16 16l6 6" stroke="#086a68" stroke-width="3"/><circle cx="15" cy="15" r="4" fill="#28a8a4" stroke="#086a68"/></svg></button>
                <button class="tool" aria-label="Map sketch"><svg viewBox="0 0 24 24"><path d="M1 6l10-5 12 3v16l-10 3-12-3z" fill="#8c8c88" stroke="#777"/><path d="M1 6l12 2v15L1 20z" fill="#f0f0ee" stroke="#999"/><path d="M4 13h5v6H4z" fill="none" stroke="#888"/><circle cx="8" cy="12" r="3" fill="none" stroke="#888"/></svg></button>
            </div>
        </div>

        <div class="workspace">
            <aside class="combo-view">
                <div class="dock-title">
                    <h2>Combo View</h2>
                    <button aria-label="Float"><svg width="11" height="11" viewBox="0 0 11 11"><path d="M.5.5h10v10H.5zM4.5 2.5h4v4h-4zM2.5 4.5h4v4h-4z" fill="none" stroke="#666"/></svg></button>
                </div>
                <div class="tabs">
                    <button class="tab">Model</button>
                    <button class="tab current">Tasks</button>
                </div>
                <div class="panel">
                    <div class="tasks">
                        <div class="close-row"><button class="btn btn-close"><u>C</u>lose</button></div>

                        <section class="task">
                            <h3><svg width="14" height="16"><use href="#page"/></svg>Solver messages<svg width="14" height="14"><use href="#fold"/></svg></h3>
                            <div class="task-body solver">
                                <p>Under-constrained sketch with 6 degrees of freedom</p>
                                <p class="ok">Solved in 0 sec</p>
                                <div class="row">
                                    <label class="check"><input type="checkbox">Auto Update</label>
                                    <button class="btn">Update</button>
                                </div>
                            </div>
                        </section>

                        <section class="task">
                            <h3><svg width="14" height="16"><use href="#page"/></svg>Edit controls<svg width="14" height="14"><use href="#fold"/></svg></h3>
                        </section>

                        <section class="task">
                            <h3><svg width="14" height="16"><use href="#page"/></svg>Constraints<svg width="14" height="14"><use href="#fold"/></svg></h3>
                            <div class="task-body">
                                <div class="row">
                                    <label for="filter">Filter:</label>
                                    <div class="combo"><select id="filter"><option>All</option></select></div>
                                </div>
                                <label class="check hide-internal"><input type="checkbox" checked>Hide Internal Aligment</label>
                                <div class="list constraints">
                                    <ul>
                                        <li><label><input type="checkbox" checked><svg><use href="#hbar"/></svg>Constraint1</label></li>
                                        <li><label><input type="checkbox" checked><svg><use href="#dot"/></svg>Constraint2</label></li>
                                        <li><label><input type="checkbox" checked><svg><use href="#hbar"/></svg>Constraint3</label></li>
                                        <li><label><input type="checkbox" checked><svg><use href="#dot"/></svg>Constraint4</label></li>
                                        <li><label><input type="checkbox" checked><svg><use href="#hbar"/></svg>Constraint5</label></li>
                                        <li><label><input type="checkbox" checked><svg><use href="#dot"/></svg>Constraint6</label></li>
                                        <li><label><input type="checkbox" checked><svg><use href="#hbar"/></svg>Constraint7</label></li>
                                        <li><label><input type="checkbox" checked aria-label="Next constraint"></label></li>
                                    </ul>
                                    <div class="scroll"><i class="up"></i><b></b><i class="down"></i></div>
                                </div>
                            </div>
                        </section>

                        <section class="task last">
                            <h3><svg width="14" height="16"><use href="#page"/></svg>Elements<svg width="14" height="14"><use href="#fold"/></svg></h3>
                            <div class="task-body">
                                <div class="row">
                                    <label for="type">Type:</label>
                                    <div class="combo off"><select id="type" disabled><option>Edge</option></select></div>
                                </div>
                                <div class="list elements">
                                    <ul>
                                        <li><svg><use href="#edge"/></svg>1-Line</li>
                                        <li><svg><use href="#edge"/></svg>2-Line</li>
                                        <li><svg><use href="#edge"/></svg>3-Line</li>
                                        <li><svg><use href="#edge"/></svg>4-Line</li>
                                        <li><svg><use href="#edge"/></svg>5-Line</li>
                                        <li><svg><use href="#edge"/></svg>6-Line</li>
                                        <li><svg><use href="#edge"/></svg>7-Line</li>
                                        <li><svg><use href="#edge"/></svg></li>
                                    </ul>
                                    <div class="scroll"><i class="up"></i><b></b><i class="down"></i></div>
                                </div>
                            </div>
                        </section>
                    </div>
                    <div class="scroll main-scroll"><i class="up"></i><b></b><i class="down"></i></div>
                </div>
            </aside>
            <div class="splitter"></div>

            <main class="mdi">
                <svg class="view" viewBox="529 200 1391 847">
                    <defs>
                        <path id="eq" d="M0-4h6v3H0zM0 1h6v3H0z"/>
                    </defs>
                    <path d="M919 212h598v598H919z" fill="#d6d6d4"/>
                    <!-- pockets, one row at a time -->
                    <g fill="none" stroke="#141414" stroke-width="2">
                        <path d="M931 358V228q0-4 4-4h131v134zM1078 228q0-4 4-4h130v134h-130q-4 0-4-4zM1224 229q0-5 5-5h125q5 0 5 5v129h-130q-5 0-5-5zM1371 229q0-5 5-5h124q5 0 5 5v124q0 5-5 5h-124q-5 0-5-5z"/>
                        <path d="M931 505V376q0-6 6-6h129v135zM1078 376q0-6 6-6h128v135h-130q-4 0-4-4zM1224 377q0-7 7-7h121q7 0 7 7v128h-129q-6 0-6-6zM1371 376q0-6 6-6h122q6 0 6 6v123q0 6-6 6h-122q-6 0-6-6z"/>
                        <path d="M931 652V523q0-6 6-6h129v135zM1078 523q0-6 6-6h122q6 0 6 6v129h-134zM1224 524q0-7 7-7h121q7 0 7 7v121q0 7-7 7h-128zM1371 523q0-6 6-6h122q6 0 6 6v123q0 6-6 6h-122q-6 0-6-6z"/>
                        <path d="M931 798V671q0-7 7-7h128v134zM1078 671q0-7 7-7h120q7 0 7 7v127h-134zM1224 671q0-7 7-7h121q7 0 7 7v120q0 7-7 7h-128zM1371 671q0-7 7-7h120q7 0 7 7v120q0 7-7 7h-120q-7 0-7-7z"/>
                    </g>
                    <g id="grid" stroke="#b4b4b2" stroke-dasharray="4 2" shape-rendering="crispEdges"></g>
                    <path d="M1218 511h178" stroke="#c86060" stroke-width="2"/>
                    <path d="M931 359h136M933 663h134" stroke="#8a1838" stroke-width="2"/>
                    <g fill="none" stroke="#0000b8" stroke-width="2">
                        <path d="M919 212h598v598H919zM1218 212v598M919 511h299"/>
                        <path d="M1072 212v598M919 364h299M919 657h299" stroke-width="3"/>
                        <path d="M1067 358l5 6-5 6M1067 505l5 6-5 6M1067 652l5 5-5 6" stroke="#101060"/>
                    </g>
                    <g fill="#f02a10">
                        <use href="#eq" x="1071" y="344"/><use href="#eq" x="1071" y="382"/><use href="#eq" x="1071" y="491"/>
                        <use href="#eq" x="1071" y="528"/><use href="#eq" x="1071" y="637"/><use href="#eq" x="1071" y="675"/>
                        <path d="M1190 369v-7l2-2h11l-7 2-4 5zM1190 662v-6l-1-3h6l-2 5z"/>
                    </g>
                    <g fill="#d82818">
                        <circle cx="931" cy="359" r="3"/><circle cx="1066" cy="359" r="3"/><circle cx="936" cy="369" r="2"/><circle cx="1066" cy="370" r="3"/>
                        <circle cx="931" cy="504" r="3"/><circle cx="1066" cy="504" r="3"/><circle cx="938" cy="515" r="3"/><circle cx="1066" cy="516" r="3"/>
                        <circle cx="931" cy="652" r="3"/><circle cx="1066" cy="652" r="3"/><circle cx="939" cy="663" r="3"/><circle cx="1066" cy="663" r="3"/>
                    </g>
                    <g stroke="#c83020" shape-rendering="crispEdges">
                        <path d="M1142 343h6M1150 343h3M1086 344v3M1086 351v2M1086 384v4M1146 489v3M1086 495v4M1086 529v4M1088 534h3M1094 534h2M1062 575v4M1054 582h3M1060 582h3M1206 583v4M1086 639v3h3M1078 678h4M1086 678v4M1092 678h4" fill="none"/>
                    </g>
                    <path stroke="#dc2c18" stroke-width="2" d="M897 282v14M897 431v14M897 578v14M897 727v14M1538 280v14M1538 427v14M1538 576v14M1538 726v14M988 832h14M1138 832h14M1287 832h14M1436 832h14"/>
                    <g fill="#ff2800">
                        <circle cx="919" cy="212" r="3.5"/><circle cx="1072" cy="212" r="3.5"/><circle cx="1218" cy="212" r="3.5"/><circle cx="1366" cy="212" r="3.5"/><circle cx="1517" cy="212" r="3.5"/>
                        <circle cx="919" cy="364" r="3.5"/><circle cx="1072" cy="364" r="3.5"/><circle cx="1218" cy="364" r="3.5"/><circle cx="1517" cy="359" r="3.5"/>
                        <circle cx="919" cy="511" r="3.5"/><circle cx="1072" cy="511" r="3.5"/><circle cx="1218" cy="511" r="3.5"/><circle cx="1517" cy="508" r="3.5"/>
                        <circle cx="919" cy="657" r="3.5"/><circle cx="1072" cy="657" r="3.5"/><circle cx="1218" cy="657" r="3.5"/><circle cx="1517" cy="655" r="3.5"/>
                        <circle cx="919" cy="810" r="3.5"/><circle cx="1072" cy="810" r="3.5"/><circle cx="1218" cy="810" r="3.5"/><circle cx="1370" cy="810" r="3.5"/><circle cx="1517" cy="810" r="3.5"/>
                    </g>
                    <!-- pointer -->
                    <path d="M1168 585v16l4-3 3 7 4-2-3-6h5z" fill="#fff" stroke="#111"/>
                    <!-- axis cross -->
                    <path d="M1878 1005v-22" stroke="#28902c" stroke-width="2"/><path d="M1874 985l4-9 4 9z" fill="#28902c"/>
                    <path d="M1878 1005h22" stroke="#982428" stroke-width="2"/><path d="M1897 1001l10 4-10 4z" fill="#982428"/>
                    <circle cx="1878" cy="1005" r="4" fill="#20288c"/>
                    <g class="axis"><text x="1880" y="977">Y</text><text x="1908" y="1005">X</text><text x="1880" y="1005">Z</text></g>
                </svg>
                <div class="doc-tabs">
                    <div class="doc-tab"><svg width="16" height="16"><use href="#freecad"/></svg><span>Unnamed1 : 1*</span><button aria-label="Close tab"><svg width="11" height="11" viewBox="0 0 11 11"><path d="M1 1l9 9M10 1l-9 9" stroke="#555" stroke-width="4"/></svg></button></div>
                </div>
            </main>
        </div>
    </div>
</div>

<script>
    // sketch grid, 30 lines each way, 12 units apart
    let d = '';
    for (let i = 0; i < 30; i++) {
        d += `M${1038 + i * 12} 334V692M1038 ${343 + i * 12}H1396`;
    }
    let path = document.createElementNS('http://www.w3.org/2000/svg', 'path');
    path.setAttribute('d', d);
    document.getElementById('grid').appendChild(path);
</script>
</body>
</html>
```
FILE: styles.css
```css
* {
    box-sizing: border-box;
}

body {
    margin: 0;
    height: 100vh;
    display: flex;
    flex-direction: column;
    overflow: hidden;
    font-family: "Noto Sans", sans-serif;
    font-size: 14px;
    line-height: 20px;
    color: #4c4c4c;
    background: #f1f1ee;
}

button, select, input {
    font: inherit;
    color: inherit;
}

button {
    border: none;
    background: none;
    padding: 0;
}

h1, h2, h3, p, ul {
    margin: 0;
    padding: 0;
    list-style: none;
    font-size: inherit;
}

svg {
    display: block;
    flex: none;
}

.defs {
    position: absolute;
    width: 0;
    height: 0;
}

/* gnome top bar */
.topbar {
    display: flex;
    align-items: center;
    position: relative;
    flex: none;
    height: 27px;
    padding: 0 14px 2px 12px;
    background: linear-gradient(#57564c, #44443d);
    color: #dfdbd2;
    font-size: 15px;
    font-weight: bold;
}

.app-menu {
    display: flex;
    align-items: center;
    gap: 6px;
    margin-left: 18px;
}

.caret {
    border: 5px solid transparent;
    border-top-color: #dfdbd2;
    border-bottom: none;
}

.clock {
    position: absolute;
    left: 49px;
    right: 0;
    text-align: center;
    font-size: 14px;
}

.tray {
    display: flex;
    align-items: center;
    gap: 12px;
    margin-left: auto;
}

.clip {
    margin-left: 14px;
}

.lang {
    display: flex;
    align-items: center;
    gap: 10px;
    margin-left: 14px;
    font-size: 14px;
    font-weight: normal;
}

.plane {
    margin-left: 20px;
}

.desktop {
    display: flex;
    flex: 1;
    min-height: 0;
}

/* launcher */
.launcher {
    flex: none;
    width: 49px;
    background: #5d5e57;
}

.launch {
    position: relative;
    display: flex;
    align-items: center;
    justify-content: center;
    width: 44px;
    height: 44px;
    margin: 1px 2px;
    border-radius: 4px;
}

.launch + .launch {
    margin-top: 2px;
}

.launch svg {
    width: 28px;
    height: 28px;
}

.launch.active {
    background: #75766f;
}

.launch.open::before {
    content: "";
    position: absolute;
    left: 0;
    top: 20px;
    width: 4px;
    height: 4px;
    border-radius: 2px;
    background: #d4582c;
}

.launch.two::before {
    top: 18px;
    box-shadow: 0 6px #d4582c;
}

.launch.apps {
    height: 36px;
}

.window {
    display: flex;
    flex-direction: column;
    flex: 1;
    min-width: 0;
}

.titlebar {
    display: flex;
    align-items: center;
    justify-content: center;
    position: relative;
    flex: none;
    height: 28px;
    padding-bottom: 2px;
    background: linear-gradient(#3a3a34, #4c4b43);
    color: #dfdbd2;
}

.titlebar h1 {
    font-size: 15px;
}

.window-buttons {
    position: absolute;
    right: 5px;
    display: flex;
    gap: 4px;
}

.window-buttons button {
    display: flex;
    align-items: center;
    justify-content: center;
    width: 16px;
    height: 16px;
    border-radius: 8px;
    background: #84837a;
}

.window-buttons .close {
    background: #ee6334;
}

.menubar {
    display: flex;
    flex: none;
    height: 25px;
    padding-left: 4px;
    background: #3c3b36;
    color: #dfdbd2;
}

.menubar button {
    padding: 0 10px;
}

u {
    text-underline-offset: 3px;
}

/* toolbars */
.toolbars {
    flex: none;
    background: #f1f1ee;
}

.toolbar {
    display: flex;
    align-items: center;
    height: 40px;
}

.grip {
    flex: none;
    width: 4px;
    height: 8px;
    margin: 0 4px 0 5px;
    background: repeating-linear-gradient(#c4c4c0 0 1px, transparent 1px 3px);
}

.grip:first-child {
    margin-left: 3px;
}

.sep {
    flex: none;
    width: 1px;
    height: 24px;
    margin: 0 5px;
    background: #d6d6d2;
}

.tool {
    display: flex;
    justify-content: center;
    flex: none;
    width: 36px;
}

.tool svg {
    width: 24px;
    height: 24px;
}

.geo .b {
    fill: none;
    stroke: #1c3454;
    stroke-width: 4;
}

.geo .f {
    fill: none;
    stroke: #4a78ac;
    stroke-width: 2;
}

.con svg {
    fill: none;
    stroke: #b01212;
    stroke-width: 4;
}

.drop {
    display: flex;
    justify-content: center;
    width: 20px;
}

.drop i {
    border: 4px solid transparent;
    border-top: 6px solid #6c6c68;
    border-bottom: none;
}

.drop.off i {
    border-top-color: #b4b4b0;
}

/* form controls */
.btn, .combo select {
    height: 25px;
    border: 1px solid #a9a9a4;
    border-radius: 4px;
    background: linear-gradient(#fefefd, #eaeae7);
    line-height: 22px;
}

.combo {
    position: relative;
}

.combo select {
    appearance: none;
    width: 100%;
    padding: 0 4px;
    display: block;
}

.combo::before, .combo::after {
    content: "";
    position: absolute;
    right: 6px;
    top: 8px;
    border: 3px solid transparent;
    border-bottom-color: #666;
    border-top: none;
}

.combo::after {
    top: 18px;
    border-top: 3px solid #666;
    border-bottom: none;
}

.combo.off select {
    color: #b0b0ac;
    border-color: #c8c8c4;
    background: #efefec;
    opacity: 1;
}

.combo.off::before, .combo.off::after {
    opacity: 0.5;
}

.workbench {
    width: 190px;
}

.workbench svg {
    position: absolute;
    left: 4px;
    top: 3px;
}

.workbench select {
    padding-left: 24px;
}

input[type="checkbox"] {
    appearance: none;
    position: relative;
    flex: none;
    width: 15px;
    height: 15px;
    margin: 0;
    border: 1px solid #8c8c88;
    border-radius: 3px;
    background: #fff;
}

input[type="checkbox"]:checked {
    border-color: #a8583a;
    background: linear-gradient(#f49a70, #ea7e50);
}

input:checked::after {
    content: "";
    position: absolute;
    left: 4px;
    top: -2px;
    width: 6px;
    height: 11px;
    border: solid #6b3a26;
    border-width: 0 2px 2px 0;
    transform: rotate(40deg);
}

.check {
    display: flex;
    align-items: center;
    gap: 8px;
    padding-left: 2px;
}

/* combo view */
.workspace {
    display: flex;
    flex: 1;
    min-height: 0;
}

.combo-view {
    display: flex;
    flex-direction: column;
    flex: none;
    width: 475px;
    padding: 0 3px 2px 1px;
}

.dock-title {
    display: flex;
    align-items: center;
    justify-content: space-between;
    height: 25px;
    padding: 0 1px;
}

.dock-title h2 {
    font-weight: normal;
}

.tabs {
    display: flex;
    align-items: flex-end;
    height: 29px;
}

.tab {
    height: 26px;
    padding: 0 8px 2px 7px;
    border: 1px solid #b4b4b0;
    border-bottom: none;
    border-radius: 4px 4px 0 0;
    background: linear-gradient(#ecece9, #dcdcd8);
}

.tab.current {
    height: 30px;
    margin: 0 0 -1px -1px;
    background: #f8f8f6;
    z-index: 1;
}

.panel {
    display: flex;
    flex: 1;
    min-height: 0;
    border: 1px solid #b0b0ac;
    border-radius: 0 3px 3px 3px;
}

.tasks {
    display: flex;
    flex-direction: column;
    flex: 1;
    min-width: 0;
    padding: 0 9px;
    background: #c8c8c4;
}

.close-row {
    display: flex;
    justify-content: center;
    height: 63px;
    padding-top: 20px;
}

.btn-close {
    width: 82px;
    border-color: #d4d4d0 #d4d4d0 #b0b0ac;
}

.task {
    flex: none;
    margin-bottom: 10px;
}

.task h3 {
    display: flex;
    align-items: center;
    gap: 5px;
    height: 25px;
    padding: 0 4px 0 8px;
    border: 1px solid #fdf6f0;
    border-radius: 4px 4px 0 0;
    background: linear-gradient(90deg, #f07b48, #fcc4aa);
    color: #fff;
}

.task h3 svg:last-child {
    margin-left: auto;
}

.task-body {
    padding: 14px 14px 12px 14px;
    background: #f1f1ee;
}

.solver {
    padding-top: 13px;
    padding-bottom: 14px;
}

.solver p {
    height: 21px;
    line-height: 16px;
    font-family: "Liberation Serif", serif;
    font-size: 13px;
    color: #666;
}

.solver .ok {
    color: #2c9430;
}

.solver .row {
    margin-top: 21px;
}

.row {
    display: flex;
    align-items: center;
    justify-content: space-between;
    height: 25px;
}

.row .btn, .row .combo {
    width: 200px;
}

.hide-internal {
    height: 35px;
}

.list {
    display: flex;
    gap: 1px;
    margin-right: -1px;
}

.list ul {
    flex: 1;
    padding-top: 1px;
    border: 1px solid #b4b4b0;
    background: #fff;
    overflow: hidden;
}

.list li {
    display: flex;
    align-items: center;
    height: 26px;
}

.list label {
    display: flex;
    align-items: center;
    gap: 7px;
    padding-left: 6px;
}

.list svg {
    width: 24px;
    height: 24px;
}

.constraints {
    height: 192px;
}

.elements {
    flex: 1;
    min-height: 0;
    margin-top: 7px;
}

.elements li {
    gap: 6px;
    padding-left: 3px;
}

.task.last {
    display: flex;
    flex-direction: column;
    flex: 1;
    min-height: 0;
    margin-bottom: 0;
}

.last .task-body {
    display: flex;
    flex-direction: column;
    flex: 1;
    min-height: 0;
    padding-bottom: 0;
}

.last h3, .last .row {
    flex: none;
}

/* scrollbars */
.scroll {
    display: flex;
    flex-direction: column;
    align-items: center;
    width: 12px;
    border: 1px solid #b8b8b4;
    border-radius: 6px;
    background: #deded9;
}

.scroll b {
    width: 12px;
    height: 34px;
    border: 1px solid #90908c;
    border-radius: 6px;
    background: linear-gradient(90deg, #fff, #e8e8e4);
}

.scroll b {
    display: flex;
    align-items: center;
    justify-content: center;
}

.scroll b::after {
    content: "";
    width: 4px;
    height: 7px;
    background: repeating-linear-gradient(#90908c 0 1px, transparent 1px 3px);
}

.main-scroll b {
    height: 83%;
}

.scroll i {
    display: flex;
    align-items: center;
    justify-content: center;
    width: 10px;
    height: 12px;
    border-radius: 5px;
    background: #f4f4f2;
}

.scroll i::after {
    content: "";
    border: 3px solid transparent;
    border-bottom-color: #aaa;
    border-top: none;
}

.scroll .down {
    margin-top: auto;
}

.scroll .down::after {
    border-top: 3px solid #666;
    border-bottom: none;
}

.splitter {
    display: flex;
    align-items: center;
    width: 5px;
}

.splitter::after {
    content: "";
    width: 4px;
    height: 8px;
    background: repeating-linear-gradient(#b4b4b0 0 1px, transparent 1px 3px);
}

/* 3d view */
.mdi {
    display: flex;
    flex-direction: column;
    flex: 1;
    min-width: 0;
}

.view {
    flex: 1;
    min-height: 0;
    width: 100%;
    background: linear-gradient(#333366, #9797aa);
}

.axis {
    font-family: "DejaVu Sans Mono", monospace;
    font-size: 11px;
    fill: #111;
}

.doc-tabs {
    display: flex;
    height: 33px;
    border-top: 1px solid #d0d0cc;
}

.doc-tab {
    display: flex;
    align-items: center;
    gap: 8px;
    height: 32px;
    padding: 0 12px 0 6px;
    border: 1px solid #b8b8b4;
    border-top: none;
    border-radius: 0 0 4px 4px;
    background: #f8f8f6;
}
```
